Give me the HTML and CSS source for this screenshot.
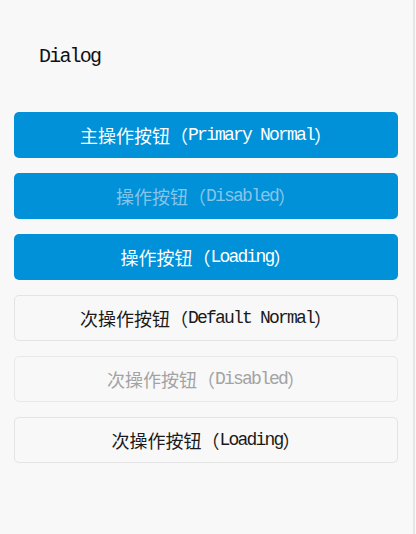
FILE: index.html
```html
<!DOCTYPE html>
<html>
<head>
<meta charset="utf-8">
<link rel="stylesheet" href="styles.css">
</head>
<body>
<div class="page">
  <div class="title"><span class="en title-en">Dialog</span></div>
  <div class="buttons">
    <div class="btn primary">主操作按钮（<span class="en">Primary Normal</span>）</div>
    <div class="btn primary disabled">操作按钮（<span class="en">Disabled</span>）</div>
    <div class="btn primary">操作按钮（<span class="en">Loading</span>）</div>
    <div class="btn default">次操作按钮（<span class="en">Default Normal</span>）</div>
    <div class="btn default disabled">次操作按钮（<span class="en">Disabled</span>）</div>
    <div class="btn default">次操作按钮（<span class="en">Loading</span>）</div>
  </div>
</div>
</body>
</html>
```
FILE: styles.css
```css
html, body {
  margin: 0;
  padding: 0;
  background: #f8f8f8;
}
body {
  font-family: "Liberation Mono", "Noto Sans CJK SC", monospace;
  color: #111;
}
.page {
  box-sizing: border-box;
  width: 415px;
  min-height: 534px;
  border-right: 2px solid #e6e6e6;
  padding: 0 15px 0 14px;
}
.title {
  padding: 45px 0 0 25px;
  height: 112px;
  box-sizing: border-box;
  font-size: 20px;
  line-height: 24px;
}
.title-en {
  letter-spacing: -2px;
}
.buttons {
  display: flex;
  flex-direction: column;
  gap: 15px;
}
.btn {
  box-sizing: border-box;
  height: 46px;
  border-radius: 5px;
  display: flex;
  align-items: center;
  justify-content: center;
  font-size: 18px;
  white-space: nowrap;
}
.en {
  letter-spacing: -1.8px;
}
.primary {
  background: #0091d8;
  color: #fff;
}
.primary.disabled {
  color: #86c4ea;
}
.default {
  background: #f8f8f8;
  border: 1px solid #e3e3e3;
  color: #1a1a1a;
}
.default.disabled {
  color: #a3a3a3;
  border-color: #e8e8e8;
}
```
